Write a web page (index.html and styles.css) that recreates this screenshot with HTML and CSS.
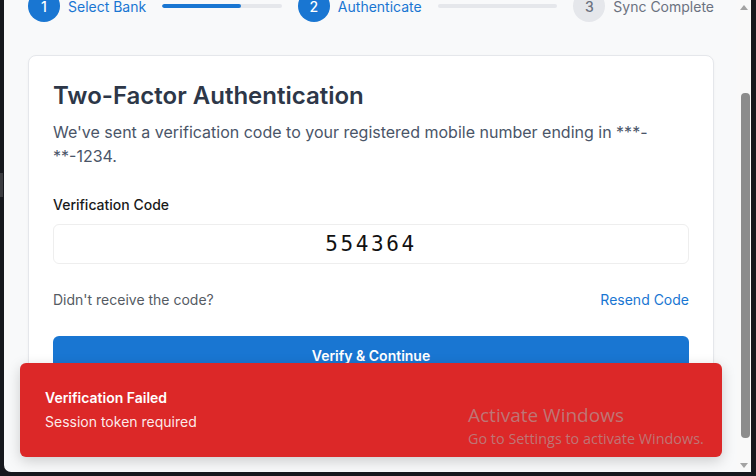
FILE: index.html
```html
<!DOCTYPE html>
<html lang="en">
<head>
<meta charset="utf-8">
<title>Two-Factor Authentication</title>
<link rel="stylesheet" href="styles.css">
</head>
<body>
<div class="desk-bit"></div>
<div class="window">
  <div class="viewport">
    <div class="page">
      <div class="steps">
        <div class="step active"><span class="dot">1</span><span class="label">Select Bank</span></div>
        <div class="bar"><div class="fill" style="width:66%"></div></div>
        <div class="step active"><span class="dot">2</span><span class="label">Authenticate</span></div>
        <div class="bar"></div>
        <div class="step"><span class="dot">3</span><span class="label">Sync Complete</span></div>
      </div>
      <div class="card">
        <h1 class="title">Two-Factor Authentication</h1>
        <p class="desc">We've sent a verification code to your registered mobile number ending in ***-**-1234.</p>
        <label class="field-label" for="code">Verification Code</label>
        <div class="code-input" id="code">554364</div>
        <div class="resend-row">
          <span class="muted">Didn't receive the code?</span>
          <span class="link">Resend Code</span>
        </div>
        <div class="btn">Verify &amp; Continue</div>
        <div class="spacer"></div>
      </div>
    </div>
  </div>
  <div class="scrollbar">
    <div class="arrow up"></div>
    <div class="track"><div class="thumb"></div></div>
    <div class="arrow down"></div>
  </div>
</div>
<div class="toast">
  <div class="toast-title">Verification Failed</div>
  <div class="toast-msg">Session token required</div>
</div>
<div class="watermark">
  <div class="wm-title">Activate Windows</div>
  <div class="wm-sub">Go to Settings to activate Windows.</div>
</div>
</body>
</html>
```
FILE: styles.css
```css
html, body {
  margin: 0;
  padding: 0;
}
body {
  width: 756px;
  height: 476px;
  background: #16181d;
  overflow: hidden;
  font-family: Inter, "Noto Sans", sans-serif;
  position: relative;
}
.desk-bit {
  position: absolute;
  left: 0;
  top: 173px;
  width: 3px;
  height: 24px;
  background: #3a3b3f;
}
.window {
  margin-left: 4px;
  width: 747px;
  height: 472px;
  background: #f8f9fa;
  border-bottom-left-radius: 7px;
  display: flex;
  overflow: hidden;
}
.viewport {
  width: 733px;
  overflow: hidden;
}
.page {
  padding: 0 23px 0 24px;
  margin-top: -10px;
}
.steps {
  display: flex;
  align-items: center;
  height: 32px;
}
.step {
  display: flex;
  align-items: center;
  gap: 8px;
}
.dot {
  width: 32px;
  height: 32px;
  border-radius: 50%;
  background: #e5e7eb;
  color: #6b7280;
  font-size: 14px;
  font-weight: 500;
  display: flex;
  align-items: center;
  justify-content: center;
}
.label {
  font-size: 14px;
  color: #6b7280;
}
.step.active .dot {
  background: #1976d2;
  color: #fff;
}
.step.active .label {
  color: #1976d2;
}
.bar {
  flex: 1;
  height: 4px;
  border-radius: 2px;
  background: #e5e7eb;
  margin: 0 16px;
  overflow: hidden;
}
.fill {
  height: 100%;
  background: #1976d2;
  border-radius: 2px;
}
.card {
  margin-top: 33px;
  background: #fff;
  border: 1px solid #e5e7eb;
  border-radius: 8px;
  padding: 24px;
  box-shadow: 0 1px 3px rgba(0,0,0,0.04);
}
.title {
  margin: 0 0 8px;
  font-size: 24px;
  line-height: 32px;
  font-weight: 600;
  color: #2d3748;
}
.desc {
  margin: 0;
  font-size: 16px;
  line-height: 24px;
  color: #4a5568;
}
.field-label {
  display: block;
  margin-top: 27px;
  font-size: 14px;
  line-height: 20px;
  font-weight: 500;
  color: #1a1a1a;
}
.code-input {
  margin-top: 9px;
  height: 38px;
  border: 1px solid #eeeeee;
  border-radius: 6px;
  display: flex;
  align-items: center;
  justify-content: center;
  font-family: "DejaVu Sans Mono", monospace;
  font-size: 21px;
  letter-spacing: 2.6px;
  color: #111;
}
.resend-row {
  margin-top: 26px;
  display: flex;
  justify-content: space-between;
  font-size: 14px;
  line-height: 20px;
}
.muted {
  color: #555b63;
}
.link {
  color: #1976d2;
}
.btn {
  margin-top: 26px;
  height: 40px;
  border-radius: 6px;
  background: #1976d2;
  color: #fff;
  font-size: 14px;
  font-weight: 600;
  display: flex;
  align-items: center;
  justify-content: center;
  padding-bottom: 1px;
  box-sizing: border-box;
}
.spacer {
  height: 40px;
}
.scrollbar {
  width: 14px;
  background: #f9f9f9;
  display: flex;
  flex-direction: column;
  align-items: center;
}
.arrow {
  width: 0;
  height: 0;
  border-left: 4px solid transparent;
  border-right: 4px solid transparent;
}
.arrow.up {
  margin-top: 5px;
  border-bottom: 5px solid #a3a3a3;
}
.arrow.down {
  margin-bottom: 4px;
  border-top: 5px solid #a3a3a3;
}
.track {
  flex: 1;
  width: 100%;
  padding: 83px 0 25px 4px;
  box-sizing: border-box;
}
.thumb {
  width: 9px;
  height: 100%;
  border-radius: 4px;
  background: #8c8c8c;
}
.toast {
  position: absolute;
  left: 20px;
  top: 363px;
  width: 702px;
  height: 94px;
  box-sizing: border-box;
  padding: 25px;
  background: #dc2828;
  border-radius: 6px;
  box-shadow: 0 4px 14px rgba(0,0,0,0.18);
  color: #fff;
  font-size: 14px;
  line-height: 20px;
}
.toast-title {
  font-weight: 600;
  margin-bottom: 4px;
}
.toast-msg {
  color: rgba(255,255,255,0.92);
}
.watermark {
  position: absolute;
  left: 468px;
  top: 403px;
  color: rgba(170,170,170,0.6);
  font-family: "Open Sans", "Noto Sans", sans-serif;
}
.wm-title {
  font-size: 19px;
  line-height: 25px;
}
.wm-sub {
  font-size: 14.4px;
  line-height: 21px;
}
```
